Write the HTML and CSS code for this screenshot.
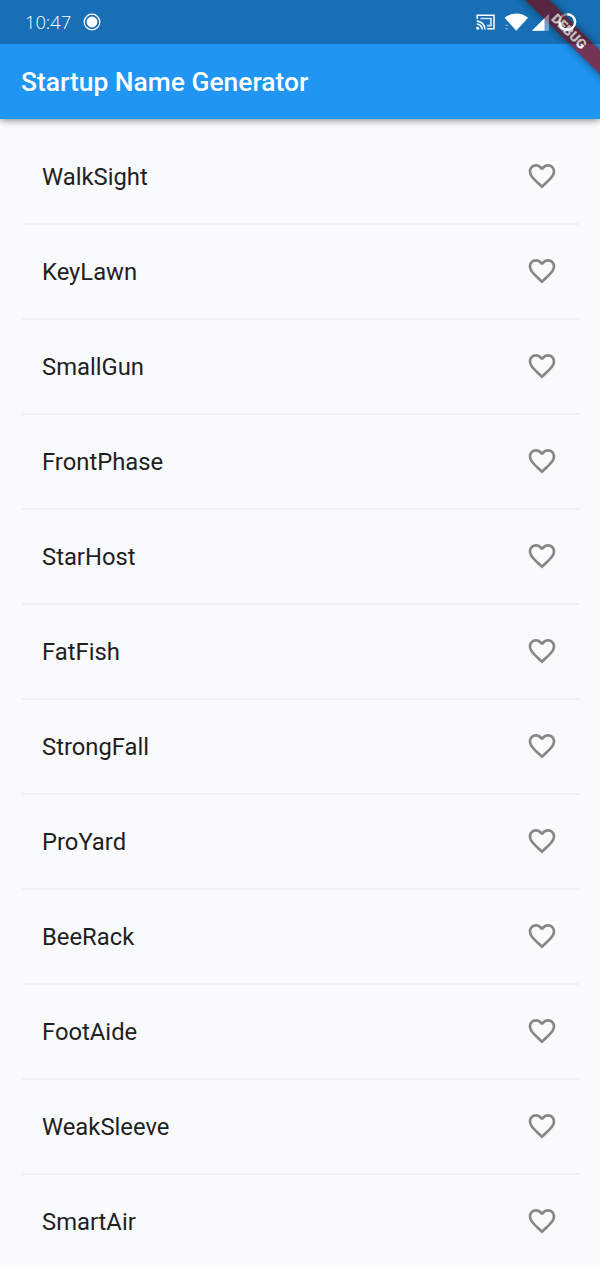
FILE: index.html
```html
<!DOCTYPE html>
<html lang="en">
<head>
<meta charset="utf-8">
<title>Startup Name Generator</title>
<link rel="stylesheet" href="styles.css">
</head>
<body>
<svg class="defs" aria-hidden="true">
  <symbol id="heart" viewBox="0 0 24 24"><path d="M16.5 3c-1.74 0-3.41.81-4.5 2.09C10.91 3.81 9.24 3 7.5 3 4.42 3 2 5.42 2 8.5c0 3.78 3.4 6.86 8.55 11.54L12 21.35l1.45-1.32C18.6 15.36 22 12.28 22 8.5 22 5.42 19.58 3 16.5 3zm-4.4 15.55l-.1.1-.1-.1C7.14 14.24 4 11.39 4 8.5 4 6.5 5.5 5 7.5 5c1.54 0 3.04.99 3.57 2.36h1.87C13.46 5.99 14.96 5 16.5 5c2 0 3.5 1.5 3.5 3.5 0 2.89-3.14 5.74-7.9 10.05z"/></symbol>
</svg>
<div class="screen">
  <header class="top">
    <div class="status">
      <span class="clock">10:47</span>
      <svg class="record" viewBox="0 0 18 18"><circle cx="9" cy="9" r="7.8" fill="none" stroke="currentColor" stroke-width="1.2"/><circle cx="9" cy="9" r="5.4"/></svg>
      <svg class="indicators" viewBox="0 0 106 24">
        <path d="M1.2 9V5.200h16.800v13.600h-6.800" fill="none" stroke="currentColor" stroke-width="1.500"/>
        <path d="M4.500 8.500h10.500v7.200h-4" fill="none" stroke="currentColor" stroke-width="1.700" opacity=".8"/>
        <path d="M.7 11.100a8.300 8.300 0 0 1 8.300 8.500M.7 14a5.500 5.500 0 0 1 5.500 5.600" fill="none" stroke="currentColor" stroke-width="1.600"/>
        <path d="M.4 16.600a3 3 0 0 1 3 3h-3z"/>
        <path d="M28.600 7.700C32 5 36 3.500 40.300 3.500s8.300 1.500 11.700 4.200L40.300 20.800z"/>
        <path d="M30.500 14l-2 2h4zM30.500 20l-2-2h4z" opacity=".35"/>
        <path d="M73 3.700V20.800H56z" opacity=".4"/>
        <path d="M68.500 8.200V20.800H56z"/>
        <circle cx="91.300" cy="12" r="7.800" fill="none" stroke="currentColor" stroke-width="2.400" opacity=".35"/>
        <path d="M91.300 4.200A7.800 7.800 0 1 1 83.500 12" fill="none" stroke="currentColor" stroke-width="2.400"/>
      </svg>
    </div>
    <h1 class="title">Startup Name Generator</h1>
    <div class="debug"><span class="ribbon">DEBUG</span></div>
  </header>
  <ul class="names">
    <li class="row"><span>WalkSight</span><svg class="heart"><use href="#heart"/></svg></li>
    <li class="row"><span>KeyLawn</span><svg class="heart"><use href="#heart"/></svg></li>
    <li class="row"><span>SmallGun</span><svg class="heart"><use href="#heart"/></svg></li>
    <li class="row"><span>FrontPhase</span><svg class="heart"><use href="#heart"/></svg></li>
    <li class="row"><span>StarHost</span><svg class="heart"><use href="#heart"/></svg></li>
    <li class="row"><span>FatFish</span><svg class="heart"><use href="#heart"/></svg></li>
    <li class="row"><span>StrongFall</span><svg class="heart"><use href="#heart"/></svg></li>
    <li class="row"><span>ProYard</span><svg class="heart"><use href="#heart"/></svg></li>
    <li class="row"><span>BeeRack</span><svg class="heart"><use href="#heart"/></svg></li>
    <li class="row"><span>FootAide</span><svg class="heart"><use href="#heart"/></svg></li>
    <li class="row"><span>WeakSleeve</span><svg class="heart"><use href="#heart"/></svg></li>
    <li class="row"><span>SmartAir</span><svg class="heart"><use href="#heart"/></svg></li>
  </ul>
</div>
</body>
</html>
```
FILE: styles.css
```css
* {
  box-sizing: border-box;
}

body {
  margin: 0;
  background: #f9fafb;
  font-family: Roboto, sans-serif;
}

.defs {
  display: none;
}

.screen {
  height: 1267px;
  overflow: hidden;
}

.top {
  position: relative;
  height: 119px;
  background: #2095f2;
  box-shadow: 0 1px 7px rgba(0, 0, 0, 0.5);
}

.status {
  position: relative;
  z-index: 2;
  display: flex;
  align-items: center;
  height: 44px;
  padding: 0 18px 0 25px;
  background: rgba(0, 0, 0, 0.25);
  color: #fff;
}

.status svg {
  fill: currentColor;
}

.clock {
  width: 46px;
  font: 300 18.300px/46px "Open Sans", "Noto Sans", sans-serif;
}

.record {
  width: 18px;
  height: 18px;
  margin-left: 12px;
}

.indicators {
  width: 106px;
  height: 24px;
  margin-left: auto;
}

.title {
  margin: 0;
  padding-left: 21px;
  color: #fff;
  font-size: 26.4px;
  font-weight: 500;
  line-height: 77px;
}

.debug {
  position: absolute;
  inset: 0 0 0 auto;
  z-index: 1;
  width: 119px;
  overflow: hidden;
}

.ribbon {
  position: absolute;
  top: 23px;
  left: 18px;
  width: 140px;
  height: 17px;
  transform: rotate(45deg);
  background: rgba(160, 0, 0, 0.65);
  box-shadow: 0 0 8px rgba(0, 0, 0, 0.5);
  color: #fff;
  font-size: 13.500px;
  font-weight: 900;
  line-height: 17px;
  text-align: center;
}

.names {
  margin: 0;
  padding: 11px 21px 0 22px;
  list-style: none;
}

.row {
  display: flex;
  align-items: center;
  justify-content: space-between;
  height: 95px;
  padding: 0 21px 0 20px;
  border-bottom: 2px solid #f0f1f2;
  color: #1f1f1f;
  font-size: 23.800px;
}

.heart {
  width: 32px;
  height: 32px;
  margin-bottom: 1px;
  fill: #878787;
}
```
